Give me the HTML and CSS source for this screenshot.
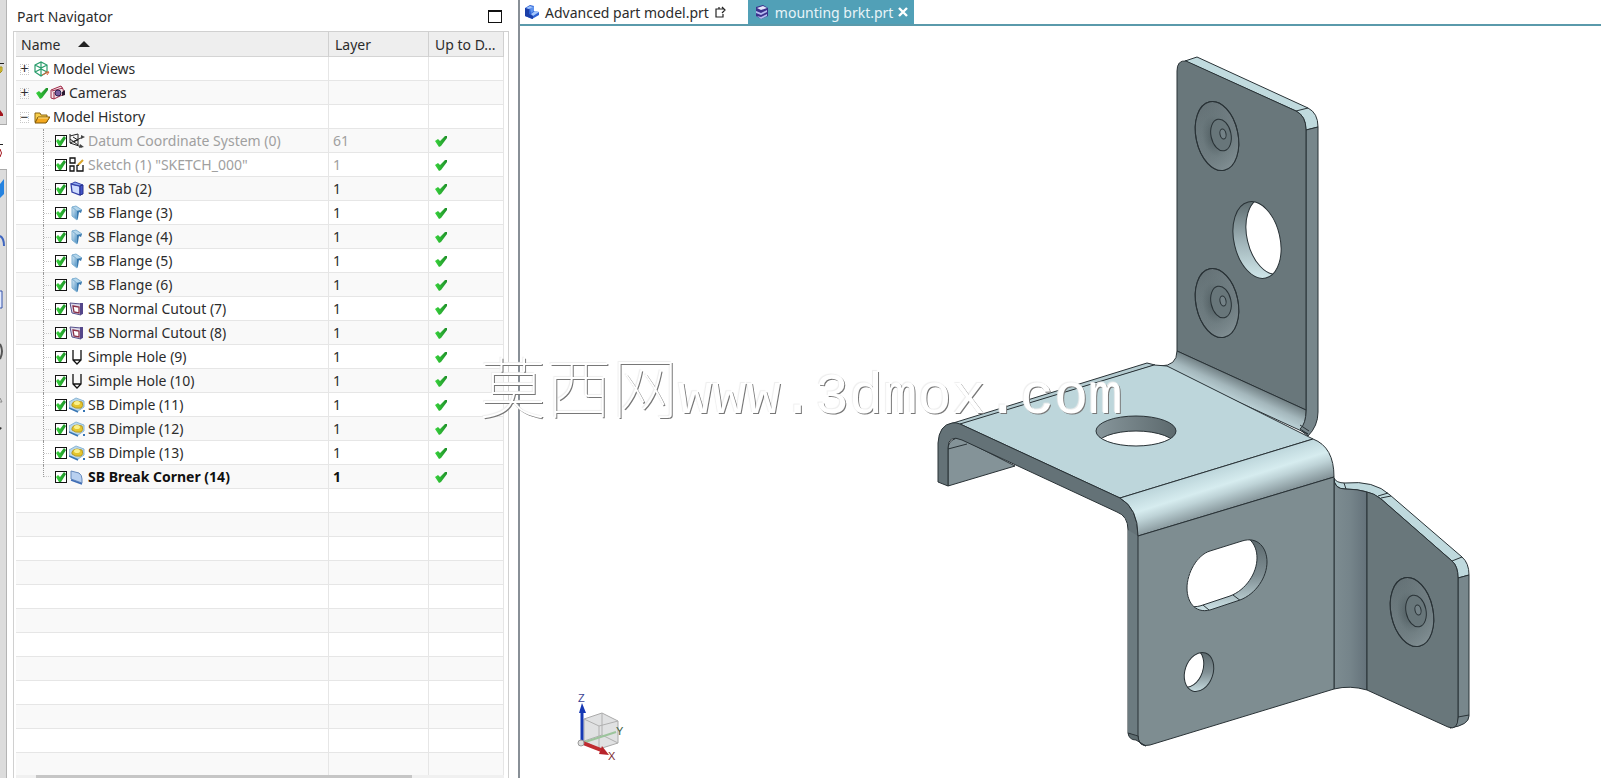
FILE: index.html
```
<!DOCTYPE html>
<html lang="en">
<head>
    <meta charset="UTF-8">
    <meta name="viewport" content="width=device-width, initial-scale=1.0">
    <title>mounting brkt.prt</title>
    <link rel="stylesheet" href="styles.css">
</head>
<body>
    <!-- Shared icons -->
    <svg class="icon-defs" aria-hidden="true">
        <defs>
            <linearGradient id="g-green" x1="0" y1="0" x2="1" y2="0">
                <stop offset="0" stop-color="#38d53c"/>
                <stop offset="1" stop-color="#1f8f2a"/>
            </linearGradient>
            <linearGradient id="g-blue" x1="0" y1="0" x2="1" y2="1">
                <stop offset="0" stop-color="#e4f3fb"/>
                <stop offset="1" stop-color="#3f86bd"/>
            </linearGradient>
        </defs>
        <symbol id="icon-check" viewBox="0 0 16 16">
            <path d="M2 8L5 6L7 8L12 3L14 3L14 5L8 13L6 14Z" fill="url(#g-green)"/>
        </symbol>
        <symbol id="icon-views" viewBox="0 0 16 16">
            <path d="M1 4L7 1L13 4V11L7 15L1 11ZM1 4L7 7L13 4M7 1V15M1 11L7 8L13 11" fill="none" stroke="#2a9d6c" stroke-width="1.2"/>
            <path d="M8 14L15 11M15 11H11M15 11L13 14" stroke="#d9643a" fill="none"/>
        </symbol>
        <symbol id="icon-camera" viewBox="0 0 16 16">
            <path d="M1 5L11 1L13 4L14 9L4 14L1 13Z" fill="#f3e3e8" stroke="#a12a48"/>
            <path d="M2 6L13 3M4 14V7" stroke="#a12a48" fill="none"/>
            <circle cx="8" cy="8" r="3" fill="#7a5fa0" stroke="#2b2050"/>
            <path d="M12 7L15 5V10L12 11Z" fill="#2b1830"/>
        </symbol>
        <symbol id="icon-folder" viewBox="0 0 16 16">
            <path d="M1 4H6L7 6H13V13H1Z" fill="#f8cf4c" stroke="#8b6510"/>
            <path d="M1 14L4 8H16L12 14Z" fill="#f4a81e" stroke="#7c5608"/>
            <path d="M4 9H14" stroke="#ffe48a"/>
        </symbol>
        <symbol id="icon-datum" viewBox="0 0 16 16">
            <path d="M1 1V10L13 14M1 10L14 4M1 3L9 1V12L1 6M4 4L9 7L4 9" fill="none" stroke="#222"/>
            <path d="M12 2L16 4L12 6ZM11 11L15 14L10 15Z" fill="#444"/>
        </symbol>
        <symbol id="icon-sketch" viewBox="0 0 16 16">
            <path d="M1 1H6V6H1ZM1 9H5V14H1ZM8 8V14H14V8" fill="none" stroke="#111" stroke-width="1.3"/>
            <path d="M9 8L14 3" stroke="#d9a52b" stroke-width="2"/>
            <path d="M8 9L10 9L9 7Z" fill="#111"/>
        </symbol>
        <symbol id="icon-tab" viewBox="0 0 16 16">
            <path d="M2 3L11 5V14L3 11Z" fill="#cfdcff" stroke="#3440a8" stroke-width="1.3"/>
            <path d="M2 3L6 1L14 4L11 5Z" fill="#8fa8ee" stroke="#3440a8"/>
            <path d="M11 5L14 4V13L11 14Z" fill="#4454c8" stroke="#27318c"/>
        </symbol>
        <symbol id="icon-flange" viewBox="0 0 16 16">
            <path d="M3 2L8 5V15L3 11Z" fill="url(#g-blue)" stroke="#7fb0d2"/>
            <path d="M3 2L7 1L13 5L8 6Z" fill="#b4d6ec" stroke="#7fb0d2"/>
            <path d="M8 6L13 5L12 8L10 7L9 13L8 15Z" fill="#3a79ae"/>
        </symbol>
        <symbol id="icon-cutout" viewBox="0 0 16 16">
            <path d="M1 2L12 3V14L3 12Z" fill="#dcd9ea" stroke="#55508a"/>
            <path d="M4 5L10 6V12L5 11Z" fill="#fff" stroke="#8a3048" stroke-width="1.3"/>
            <path d="M11 2L14 2V13L11 14Z" fill="#54468a"/>
        </symbol>
        <symbol id="icon-hole" viewBox="0 0 16 16">
            <path d="M4 1V11L8 15L12 11V1M4 11H12" fill="none" stroke="#111" stroke-width="1.3"/>
        </symbol>
        <symbol id="icon-dimple" viewBox="0 0 16 16">
            <path d="M0 5L7 1L15 4V10L9 14L0 11Z" fill="#b9d7ec" stroke="#8cb6d4"/>
            <path d="M0 11L9 15" stroke="#3675b4" stroke-width="1.5"/>
            <path d="M3 7Q4 4 8 4L13 5Q15 9 12 11Q6 12 3 9Z" fill="#e5c62c" stroke="#b89a24"/>
            <ellipse cx="8" cy="6" rx="3" ry="2" fill="#faf08a"/>
            <path d="M14 13h2v2h-2Z" fill="#3675b4"/>
        </symbol>
        <symbol id="icon-corner" viewBox="0 0 16 16">
            <path d="M2 2L10 4Q13 6 13 10V14L2 10Z" fill="#b8d0f0" stroke="#6488bb"/>
            <path d="M2 11L13 15" stroke="#3d6cb5" stroke-width="1.5"/>
        </symbol>
        <symbol id="icon-part" viewBox="0 0 16 16">
            <path d="M1 4L6 1L10 2V7L15 8V11L8 15L1 12Z" fill="#2d62d4"/>
            <path d="M6 4L10 2V7L7 9Z" fill="#5f93ee"/>
            <path d="M7 10L11 7L15 8L9 12Z" fill="#a4c6fb"/>
            <path d="M1 4L5 5V10L9 12V15L1 12Z" fill="#1c3fa8"/>
            <path d="M2 4L6 2L9 3L5 5Z" fill="#a4c6fb"/>
        </symbol>
        <symbol id="icon-sheet" viewBox="0 0 16 16">
            <path d="M2 3L9 1L14 4V12L7 15L2 12Z" fill="#3b328c"/>
            <path d="M3 4L9 2L13 4L7 6Z" fill="#e6e6fb"/>
            <path d="M2 7L7 9L13 6V8L7 11L2 9ZM3 12L7 13L13 10V12L7 15Z" fill="#b5bbf0"/>
        </symbol>
    </svg>

    <div class="app">
        <nav class="rail" aria-label="Resource bar">
            <svg class="rail-icons" width="7" height="440" viewBox="0 0 7 440" aria-hidden="true">
                <rect y="125" width="7" height="44" fill="#fff"/>
                <path d="M0 124.5H7M0 169.5H7" stroke="#aaa"/>
                <path d="M0 63.5H4M0 144.5H3" stroke="#222"/>
                <path d="M0 67H2V71L0 73Z" fill="#e8cf3c" stroke="#a8941c"/>
                <path d="M0 110L3 114V116H0Z" fill="#a3161e"/>
                <path d="M0 149Q3 153 0 157" fill="none" stroke="#a3161e"/>
                <path d="M0 184L4 179V194L0 198Z" fill="#2583e0"/>
                <path d="M0 236Q4 238 4 246" fill="none" stroke="#3f66c0" stroke-width="2"/>
                <path d="M0 291H2V308H0" fill="#e4ebff" stroke="#3553a8"/>
                <path d="M0 344Q4 351 0 359" fill="none" stroke="#555" stroke-width="2"/>
                <path d="M0 398L2 402H0" fill="none" stroke="#888"/>
                <path d="M0 427L2 428L0 430Z" fill="#333"/>
            </svg>
        </nav>

        <aside class="navigator">
            <header class="navigator-title">
                <h1>Part Navigator</h1>
                <button class="pin" type="button" aria-label="Undock"></button>
            </header>
            <div class="tree">
                <table>
                    <thead>
                        <tr>
                            <th>Name <span class="sort"></span></th>
                            <th>Layer</th>
                            <th>Up to D...</th>
                            <th></th>
                        </tr>
                    </thead>
                    <tbody id="tree-body"></tbody>
                </table>
                <div class="scroll-track"><div class="scroll-thumb"></div></div>
            </div>
        </aside>

        <main class="viewport">
            <div class="tabs">
                <button class="tab" type="button">
                    <svg class="icon"><use href="#icon-part"/></svg>
                    <span>Advanced part model.prt</span>
                    <svg class="modified" width="12" height="12" viewBox="0 0 12 12"><path d="M5 3H2V11H9V8M5 3V1M5 3H10M8 1L11 4L8 7" fill="none" stroke="#222" stroke-width="1.2"/></svg>
                </button>
                <button class="tab active" type="button">
                    <svg class="icon"><use href="#icon-sheet"/></svg>
                    <span>mounting brkt.prt</span>
                    <svg class="close" width="10" height="10" viewBox="0 0 10 10"><path d="M1 1L9 9M9 1L1 9" stroke="#fff" stroke-width="2.4"/></svg>
                </button>
            </div>

            <svg class="canvas" viewBox="520 26 1081 752" preserveAspectRatio="xMinYMin meet" role="img" aria-label="Mounting bracket">
                <defs>
                    <linearGradient id="bend-front" gradientUnits="userSpaceOnUse" x1="1216" y1="469" x2="1229" y2="510">
                        <stop offset="0" stop-color="#bdd6db"/>
                        <stop offset=".4" stop-color="#d6ecef"/>
                        <stop offset=".6" stop-color="#bed3d7"/>
                        <stop offset="1" stop-color="#819095"/>
                    </linearGradient>
                    <linearGradient id="bend-back" gradientUnits="userSpaceOnUse" x1="1243" y1="379" x2="1232" y2="403">
                        <stop offset="0" stop-color="#69777b"/>
                        <stop offset=".5" stop-color="#a4b7bc"/>
                        <stop offset="1" stop-color="#c4dbe0"/>
                    </linearGradient>
                    <linearGradient id="bend-side" x1="0" y1="0" x2="1" y2="0">
                        <stop offset="0" stop-color="#7d8c91"/>
                        <stop offset=".5" stop-color="#75848a"/>
                        <stop offset="1" stop-color="#64727a"/>
                    </linearGradient>
                    <linearGradient id="wall" x1="0" y1="0" x2="0" y2="1">
                        <stop offset="0" stop-color="#566366"/>
                        <stop offset=".5" stop-color="#9db0b5"/>
                        <stop offset="1" stop-color="#d6eef1"/>
                    </linearGradient>
                    <linearGradient id="wall-front" x1="0" y1="0" x2="0" y2="1">
                        <stop offset="0" stop-color="#5a676b"/>
                        <stop offset=".5" stop-color="#7f8e93"/>
                        <stop offset="1" stop-color="#d0e6ea"/>
                    </linearGradient>
                    <linearGradient id="wall-top" x1="0" y1="0" x2="1" y2="0">
                        <stop offset="0" stop-color="#87969b"/>
                        <stop offset="1" stop-color="#5c696d"/>
                    </linearGradient>
                    <radialGradient id="dish" cx=".45" cy=".5" r=".6">
                        <stop offset="0" stop-color="#4d5a5e"/>
                        <stop offset=".5" stop-color="#6c7a7e"/>
                        <stop offset="1" stop-color="#737f84"/>
                    </radialGradient>
                    <linearGradient id="shine" x1=".3" y1="0" x2=".6" y2="1">
                        <stop offset="0" stop-color="#566367" stop-opacity=".5"/>
                        <stop offset=".5" stop-color="#6a787c" stop-opacity="0"/>
                        <stop offset="1" stop-color="#8c9b9f" stop-opacity=".6"/>
                    </linearGradient>
                    <clipPath id="clip-plate"><ellipse cx="1257" cy="240" rx="23" ry="39" transform="rotate(-13 1257 240)"/></clipPath>
                    <clipPath id="clip-top"><ellipse cx="1136" cy="431" rx="40" ry="15"/></clipPath>
                    <clipPath id="clip-small"><ellipse cx="1199" cy="672" rx="14" ry="20" transform="rotate(19 1199 672)"/></clipPath>
                    <clipPath id="clip-slot"><path d="M1210 551L1242 541C1258 536 1267 548 1267 562C1267 577 1256 594 1240 600L1213 609C1197 615 1187 604 1187 588C1187 573 1197 555 1210 551Z"/></clipPath>
                    <g id="dimple">
                        <ellipse rx="21" ry="35" transform="rotate(-12)" fill="url(#dish)"/>
                        <ellipse rx="21" ry="35" transform="rotate(-12)" fill="url(#shine)" stroke="#293236"/>
                        <ellipse cx="4" cy="-1" rx="10" ry="16" transform="rotate(-12 4 -1)" fill="#68767a" stroke="#293236"/>
                        <ellipse cx="6" cy="-2" rx="3" ry="5" transform="rotate(-12 6 -2)" fill="#748287" stroke="#293236"/>
                    </g>
                </defs>

                <g stroke="#293236" stroke-linejoin="round">
                    <!-- rear flange under the top plate -->
                    <path d="M948 447Q950 438 960 438L1015 466L948 486Z" fill="#849398"/>
                    <path d="M948 449L967 444" fill="none"/>

                    <!-- upright plate -->
                    <path d="M1185 61L1197 57L1308 108Q1318 113 1318 127L1306 130Q1306 116 1296 111Z" fill="#c0dade"/>
                    <path d="M1296 111L1308 108" fill="none"/>
                    <path d="M1306 130L1318 127V412Q1318 426 1308 436L1299 429Q1306 424 1306 410Z" fill="#77868b"/>
                    <path d="M1177 351V71Q1177 60 1186 61L1296 111Q1306 116 1306 130V410Z" fill="#69777b"/>
                    <path d="M1177 351Q1177 366 1160 366L1308 434L1300 429Q1306 424 1306 410Z" fill="url(#bend-back)"/>
                    <path d="M1300 425L1309 431" fill="none"/>
                    <use href="#dimple" x="1217" y="136"/>
                    <use href="#dimple" x="1217" y="303"/>
                    <g clip-path="url(#clip-plate)">
                        <rect x="1230" y="196" width="54" height="88" fill="url(#wall)" stroke="none"/>
                        <ellipse cx="1270" cy="236" rx="23" ry="39" transform="rotate(-13 1270 236)" fill="#fff"/>
                    </g>
                    <ellipse cx="1257" cy="240" rx="23" ry="39" transform="rotate(-13 1257 240)" fill="none"/>

                    <!-- top plate -->
                    <path d="M950 424L1147 363L1155 365L960 425Z" fill="#b4cbd0"/>
                    <path d="M960 424L1154 365L1167 366L1313 439L1120 498Z" fill="#bdd6db"/>
                    <g clip-path="url(#clip-top)">
                        <rect x="1096" y="416" width="80" height="30" fill="url(#wall-top)" stroke="none"/>
                        <ellipse cx="1136" cy="446" rx="40" ry="15" fill="#fff"/>
                    </g>
                    <ellipse cx="1136" cy="431" rx="40" ry="15" fill="none"/>
                    <path d="M938 482V443Q939 425 952 423Q956 422 960 424L1120 498Q1138 508 1138 536V735L1128 733V530Q1128 516 1117 512L962 440Q948 434 948 448V486Z" fill="#647277"/>
                    <path d="M1128 530V733L1138 736V536Z" fill="#6c7b80" stroke="none"/>
                    <path d="M1120 498L1313 439Q1334 447 1334 477L1138 536Q1138 508 1120 498Z" fill="url(#bend-front)"/>

                    <!-- side flange -->
                    <path d="M1334 478Q1336 483 1345 483Q1374 480 1390 495L1462 557Q1469 563 1469 575L1458 578Q1458 566 1452 561L1380 498Q1366 489 1345 489Q1334 489 1334 478Z" fill="#bfd9dd"/>
                    <path d="M1344 483L1346 489M1378 496L1388 493M1381 498L1391 496M1452 561L1462 557" fill="none"/>
                    <path d="M1458 578L1469 575V716Q1469 725 1450 728Q1458 725 1458 717Z" fill="#78878c"/>
                    <path d="M1458 717L1469 715" fill="none"/>
                    <path d="M1334 478Q1334 489 1345 489Q1358 489 1367 492V690Q1350 685 1334 689Z" fill="url(#bend-side)"/>
                    <path d="M1367 492Q1374 493 1381 499L1452 561Q1458 566 1458 578V717Q1458 731 1448 727L1367 690Z" fill="#69777b"/>
                    <use href="#dimple" x="1412" y="612"/>

                    <!-- front face -->
                    <path d="M1138 536L1334 477V689L1150 745Q1138 748 1138 735Z" fill="#7e8d91"/>
                    <path d="M1128 733Q1129 740 1136 740L1146 746Q1138 744 1138 736Z" fill="#5e6c70"/>
                    <g clip-path="url(#clip-slot)">
                        <rect x="1186" y="538" width="82" height="74" fill="url(#wall-front)" stroke="none"/>
                        <path transform="translate(-10 -4)" d="M1210 551L1242 541C1258 536 1267 548 1267 562C1267 577 1256 594 1240 600L1213 609C1197 615 1187 604 1187 588C1187 573 1197 555 1210 551Z" fill="#fff"/>
                        <path d="M1203 605L1209 610M1233 595L1241 601" fill="none"/>
                        <path d="M1180 530H1240V590L1180 602Z" fill="#fff" stroke="none"/>
                    </g>
                    <path d="M1210 551L1242 541C1258 536 1267 548 1267 562C1267 577 1256 594 1240 600L1213 609C1197 615 1187 604 1187 588C1187 573 1197 555 1210 551Z" fill="none"/>
                    <g clip-path="url(#clip-small)">
                        <rect x="1182" y="650" width="34" height="44" fill="url(#wall-front)" stroke="none"/>
                        <ellipse cx="1189" cy="668" rx="14" ry="20" transform="rotate(19 1189 668)" fill="#fff"/>
                    </g>
                    <ellipse cx="1199" cy="672" rx="14" ry="20" transform="rotate(19 1199 672)" fill="none"/>
                </g>

                <!-- view triad -->
                <g>
                    <path d="M584 719L602 713L618 721V743L599 749L584 741Z" fill="#e0e1e2" stroke="#aaa"/>
                    <path d="M584 719L599 726L618 721M599 726V749M602 713V735L584 741M602 735L618 743" fill="none" stroke="#b0b0b0"/>
                    <path d="M582 743L616 732" stroke="#9cc49c" stroke-width="2"/>
                    <path d="M582 742V709" stroke="#1538b4" stroke-width="3"/>
                    <path d="M579 713L582 703L586 713Z" fill="#1538b4"/>
                    <path d="M583 743L601 750" stroke="#c02b30" stroke-width="4"/>
                    <path d="M599 754L602 746L609 755Z" fill="#b8242a"/>
                    <circle cx="581" cy="743" r="3" fill="#ddd" stroke="#999"/>
                    <text class="axis axis-z" x="578" y="702">Z</text>
                    <text class="axis axis-y" x="616" y="735">Y</text>
                    <text class="axis axis-x" x="608" y="760">X</text>
                </g>
            </svg>
        </main>

        <div class="watermark"><span class="watermark-name">莫西网</span><span>www.3dmox.com</span></div>
    </div>

    <script>
        const features = [
            ['Datum Coordinate System (0)', 'datum', '61', 'muted'],
            ['Sketch (1) "SKETCH_000"', 'sketch', '1', 'muted'],
            ['SB Tab (2)', 'tab', '1'],
            ['SB Flange (3)', 'flange', '1'],
            ['SB Flange (4)', 'flange', '1'],
            ['SB Flange (5)', 'flange', '1'],
            ['SB Flange (6)', 'flange', '1'],
            ['SB Normal Cutout (7)', 'cutout', '1'],
            ['SB Normal Cutout (8)', 'cutout', '1'],
            ['Simple Hole (9)', 'hole', '1'],
            ['Simple Hole (10)', 'hole', '1'],
            ['SB Dimple (11)', 'dimple', '1'],
            ['SB Dimple (12)', 'dimple', '1'],
            ['SB Dimple (13)', 'dimple', '1'],
            ['SB Break Corner (14)', 'corner', '1', 'current']
        ];
        const emptyRows = 12;

        function icon(name) {
            return `<svg class="icon"><use href="#icon-${name}"/></svg>`;
        }

        function row(cls, name, layer, date) {
            return `<tr class="${cls}"><td>${name}</td><td>${layer}</td><td>${date}</td><td></td></tr>`;
        }

        function group(label, sign, icons) {
            const button = `<button class="expander" type="button" aria-label="Toggle ${label}">${sign}</button>`;
            return row('group', `<div class="node">${button}${icons}<span>${label}</span></div>`, '', '');
        }

        let html = group('Model Views', '+', icon('views'));
        html += group('Cameras', '+', icon('check') + icon('camera'));
        html += group('Model History', '−', icon('folder'));

        // Feature rows, each with its suppress check box
        features.forEach(([label, type, layer, state], i) => {
            const name = `<div class="node leaf"><span class="branch"></span>
                <input type="checkbox" id="f${i}" checked>${icon(type)}<label for="f${i}">${label}</label></div>`;
            html += row(state || '', name, layer, icon('check'));
        });

        for (let i = 0; i < emptyRows; i++) html += row('', '', '', '');
        document.getElementById('tree-body').innerHTML = html;
    </script>
</body>
</html>
```
FILE: styles.css
```
* {
    box-sizing: border-box;
}
body {
    margin: 0;
    font-family: "Noto Sans", "Open Sans", sans-serif;
    font-size: 14px;
    color: #2c2c2c;
    background-color: #fff;
}
button {
    font: inherit;
    color: inherit;
    border: 0;
    padding: 0;
    background: none;
}
.icon-defs {
    position: absolute;
    width: 0;
    height: 0;
}
.icon {
    width: 16px;
    height: 16px;
    flex: none;
    display: block;
}
.app {
    position: relative;
    display: flex;
    height: 100vh;
    overflow: hidden;
}

/* Resource bar */
.rail {
    flex: none;
    width: 7px;
    background-color: #dcdcdc;
    border-right: 1px solid #b4b4b4;
}
.rail-icons {
    display: block;
}

/* Part navigator */
.navigator {
    flex: none;
    width: 511px;
    display: flex;
    flex-direction: column;
    padding: 0 9px 0 6px;
}
.navigator-title {
    flex: none;
    height: 31px;
    display: flex;
    align-items: center;
    justify-content: space-between;
    padding: 2px 7px 0 4px;
}
.navigator-title h1 {
    margin: 0;
    font-size: 14px;
    font-weight: normal;
}
.pin {
    width: 14px;
    height: 13px;
    border: 1px solid #111;
    border-top-width: 2px;
}
.tree {
    flex: 1;
    min-height: 0;
    display: flex;
    flex-direction: column;
    overflow: hidden;
    border: 1px solid #d0d0d0;
    border-bottom: 0;
    padding: 0 4px 0 2px;
}
table {
    flex: 1;
    min-height: 0;
    width: 100%;
    display: block;
    overflow: hidden;
    border-collapse: collapse;
}
thead, tbody {
    display: block;
}
tr {
    display: grid;
    grid-template-columns: 313px 100px 75px 1fr;
    height: 24px;
    border-bottom: 1px solid #e6e6e6;
}
thead tr {
    height: 25px;
    background-color: #eee;
    border-bottom-color: #d4d4d4;
}
th, td {
    padding: 0 0 0 4px;
    line-height: 24px;
    text-align: left;
    border-right: 1px solid #e6e6e6;
}
th {
    padding-left: 6px;
    line-height: 26px;
    font-weight: normal;
    border-right-color: #d0d0d0;
}
th:first-child {
    padding-left: 5px;
}
th:last-child, td:last-child {
    border-right: 0;
}
tbody tr:nth-child(even) {
    background-color: #f9f9f9;
}
td:nth-child(3) {
    padding-top: 4px;
}
.sort {
    display: inline-block;
    margin: 0 0 3px 14px;
    border: 6px solid transparent;
    border-top: 0;
    border-bottom-color: #222;
}
.muted {
    color: #a0a0a0;
}
.current {
    color: #111;
    font-weight: bold;
}

/* Tree nodes */
.node {
    display: flex;
    align-items: center;
    height: 24px;
}
.node span, .node label {
    margin-left: 3px;
    white-space: nowrap;
}
.node .expander {
    width: 9px;
    height: 11px;
    margin-right: 5px;
    border: 1px dotted #c8c8c8;
    display: flex;
    align-items: center;
    justify-content: center;
}
.leaf {
    padding-left: 23px;
}
.leaf .branch {
    width: 9px;
    height: 24px;
    margin: 0 3px 0 0;
    border-left: 1px dotted #999;
    background: linear-gradient(90deg, #ccc 50%, transparent 50%) 0 12px / 2px 1px repeat-x;
}
.current .branch {
    height: 12px;
    align-self: flex-start;
    background-position: 0 11px;
}
.leaf input {
    appearance: none;
    flex: none;
    width: 12px;
    height: 12px;
    margin: 0 2px 0 0;
    border: 1px solid #111;
    background-color: #fff;
}
.leaf input:checked::before {
    content: "";
    display: block;
    width: 10px;
    height: 10px;
    background: linear-gradient(90deg, #38d53c, #1f8f2a);
    clip-path: polygon(0 50%, 20% 30%, 40% 50%, 80% 0, 100% 20%, 50% 100%, 30% 100%);
}
.scroll-track {
    flex: none;
    height: 3px;
    background-color: #f0f0f0;
}
.scroll-thumb {
    width: 77%;
    height: 3px;
    margin-left: 20px;
    background-color: #c6c6c6;
}

/* Graphics window */
.viewport {
    flex: 1;
    min-width: 0;
    display: flex;
    flex-direction: column;
    border-left: 2px solid #888f96;
}
.tabs {
    flex: none;
    height: 26px;
    display: flex;
    border-bottom: 2px solid #5a9aab;
}
.tab {
    display: flex;
    align-items: center;
    gap: 5px;
    padding: 0 22px 0 4px;
    white-space: nowrap;
}
.tab.active {
    padding: 0 6px;
    color: #e8f4f7;
    background-color: #51a0b7;
}
.canvas {
    flex: 1;
    min-height: 0;
    width: 100%;
    display: block;
}
.axis {
    font-family: "Liberation Sans", sans-serif;
    font-size: 11px;
}
.axis-x {
    fill: #7c2a30;
}
.axis-y {
    fill: #3c5c3c;
}
.axis-z {
    fill: #3c4494;
}
.watermark {
    position: absolute;
    left: 480px;
    top: 348px;
    display: flex;
    align-items: baseline;
    font-family: "Liberation Mono", monospace;
    font-size: 57px;
    line-height: 72px;
    white-space: nowrap;
    color: #fff;
    text-shadow: 1px 1px 0 #777, -1px -1px 1px #eee;
    pointer-events: none;
}
.watermark-name {
    font-family: "Noto Sans CJK SC", sans-serif;
    font-size: 66px;
    font-weight: 100;
}
```
